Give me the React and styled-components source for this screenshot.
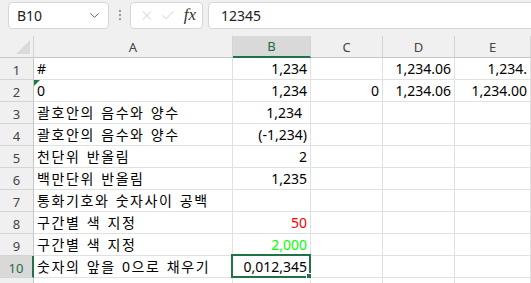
import React from "react";
import styled, { createGlobalStyle } from "styled-components";
import { ChevronDown, EllipsisVertical, X, Check } from "lucide-react";

const GlobalStyle = createGlobalStyle`
  html, body {
    margin: 0;
    padding: 0;
    background: #f0f0f0;
    overflow: hidden;
  }
`;

const Page = styled.div`
  width: 531px;
  height: 283px;
  overflow: hidden;
  background: #f0f0f0;
  font-family: "Noto Sans", "Noto Sans CJK KR", sans-serif;
`;

const Toolbar = styled.div`
  display: flex;
  align-items: center;
  height: 30px;
  padding: 0 0 0 8px;
  margin-bottom: 6px;
`;

const Box = styled.div`
  display: flex;
  align-items: center;
  box-sizing: border-box;
  height: 27px;
  background: #fff;
  border: 1px solid #d6d6d6;
  border-radius: 4px;
`;

const NameBox = styled(Box)`
  width: 101px;
  padding: 0 6px 0 8px;
  justify-content: space-between;
  font-size: 14px;
  color: #222;
`;

const Dots = styled.div`
  display: flex;
  width: 21px;
  justify-content: center;
  color: #9a9a9a;
`;

const FuncBox = styled(Box)`
  width: 73px;
  padding: 0 6px 0 8px;
  gap: 5px;
  color: #c4c4c4;
`;

const Fx = styled.span`
  margin-left: 3px;
  font-family: "Liberation Serif", serif;
  font-style: italic;
  font-size: 17px;
  color: #333;
`;

const FormulaBox = styled(Box)`
  flex: 1;
  margin-left: 5px;
  margin-right: -6px;
  padding-left: 12px;
  font-size: 14px;
  color: #222;
  border-top-right-radius: 0;
  border-bottom-right-radius: 0;
`;

const Grid = styled.div`
  display: grid;
  grid-template-columns: 34px 199px 78px 72px 72px 76px 40px;
  grid-auto-rows: 22px;
`;

const Corner = styled.div`
  position: relative;
  background: #f0f0f0;
  border-right: 1px solid #d4d4d4;
  border-bottom: 1px solid #c6c6c6;
  &::after {
    content: "";
    position: absolute;
    right: 3px;
    bottom: 3px;
    border-style: solid;
    border-width: 0 0 14px 14px;
    border-color: transparent transparent #dadada transparent;
  }
`;

const ColHead = styled.div`
  display: flex;
  align-items: center;
  justify-content: center;
  box-sizing: border-box;
  background: ${(p) => (p.$active ? "#d9d9d9" : "#f0f0f0")};
  border-right: 1px solid #d4d4d4;
  border-bottom: ${(p) => (p.$active ? "2px solid #217346" : "1px solid #c6c6c6")};
  font-size: 13px;
  color: ${(p) => (p.$active ? "#1d6b40" : "#444")};
`;

const RowHead = styled.div`
  display: flex;
  align-items: center;
  justify-content: center;
  box-sizing: border-box;
  padding-top: 2px;
  background: ${(p) => (p.$active ? "#d9d9d9" : "#f0f0f0")};
  border-right: ${(p) => (p.$active ? "2px solid #217346" : "1px solid #c6c6c6")};
  border-bottom: 1px solid #d4d4d4;
  font-size: 13px;
  color: ${(p) => (p.$active ? "#1d6b40" : "#444")};
`;

const Cell = styled.div`
  position: relative;
  display: flex;
  align-items: flex-end;
  justify-content: ${(p) => (p.$right ? "flex-end" : "flex-start")};
  box-sizing: border-box;
  padding: 0 ${(p) => (p.$pad ? 8 : 3)}px 1px 3px;
  background: #fff;
  border-right: 1px solid #e1e1e1;
  border-bottom: 1px solid #e1e1e1;
  font-size: 14px;
  line-height: 19px;
  white-space: nowrap;
  overflow: visible;
  color: ${(p) => p.$color || "#000"};
`;

const Label = styled(Cell)`
  letter-spacing: 1.6px;
  word-spacing: 1px;
  font-feature-settings: "palt";
`;

const ErrorMark = styled.span`
  position: absolute;
  left: 0;
  top: 0;
  border-style: solid;
  border-width: 6px 6px 0 0;
  border-color: #1e7b3c transparent transparent transparent;
`;

const Selection = styled.span`
  position: absolute;
  left: -2px;
  top: -2px;
  right: -1px;
  bottom: -1px;
  border: 2px solid #217346;
  pointer-events: none;
  &::after {
    content: "";
    position: absolute;
    right: -4px;
    bottom: -4px;
    width: 5px;
    height: 5px;
    background: #217346;
    border: 1px solid #fff;
  }
`;

const columns = ["A", "B", "C", "D", "E", ""];

const rows = [
  ["#", "1,234", "", "1,234.06", "1,234."],
  ["0", "1,234", "0", "1,234.06", "1,234.00"],
  ["괄호안의 음수와 양수", "1,234", "", "", ""],
  ["괄호안의 음수와 양수", "(-1,234)", "", "", ""],
  ["천단위 반올림", "2", "", "", ""],
  ["백만단위 반올림", "1,235", "", "", ""],
  ["통화기호와 숫자사이 공백", "", "", "", ""],
  ["구간별 색 지정", "50", "", "", ""],
  ["구간별 색 지정", "2,000", "", "", ""],
  ["숫자의 앞을 0으로 채우기", "0,012,345", "", "", ""],
  ["", "", "", "", ""],
];

const colors = { 8: "#ff0000", 9: "#00ff00" };

export default function App() {
  return (
    <Page>
      <GlobalStyle />
      <Toolbar>
        <NameBox>
          <span>B10</span>
          <ChevronDown size={15} strokeWidth={1.5} color="#555" />
        </NameBox>
        <Dots>
          <EllipsisVertical size={14} strokeWidth={2} />
        </Dots>
        <FuncBox>
          <X size={17} strokeWidth={1.2} />
          <Check size={17} strokeWidth={1.2} />
          <Fx>fx</Fx>
        </FuncBox>
        <FormulaBox>12345</FormulaBox>
      </Toolbar>
      <Grid>
        <Corner />
        {columns.map((c, i) => (
          <ColHead key={i} $active={c === "B"}>
            {c}
          </ColHead>
        ))}
        {rows.map((r, ri) => {
          const n = ri + 1;
          const [label, ...values] = r;
          return (
            <React.Fragment key={n}>
              <RowHead $active={n === 10}>{n <= 10 ? n : ""}</RowHead>
              <Label>
                {n === 2 && <ErrorMark />}
                {label}
              </Label>
              {values.map((v, ci) => (
                <Cell
                  key={ci}
                  $right
                  $pad={n === 3 && ci === 0}
                  $color={ci === 0 ? colors[n] : undefined}
                >
                  {v}
                  {n === 10 && ci === 0 && <Selection />}
                </Cell>
              ))}
              <Cell $right />
            </React.Fragment>
          );
        })}
      </Grid>
    </Page>
  );
}
